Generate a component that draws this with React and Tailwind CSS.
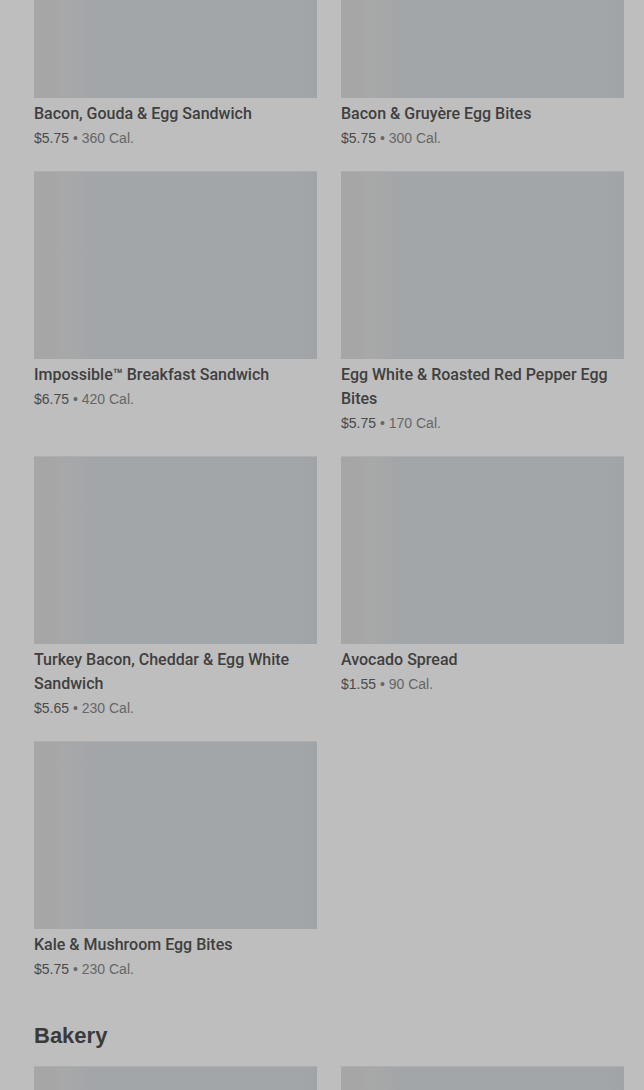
const font = { fontFamily: '"Liberation Sans", Arial, sans-serif' };
const titleFont = { fontFamily: 'Roboto, "Liberation Sans", Arial, sans-serif' };

const breakfast = [
  { name: 'Bacon, Gouda & Egg Sandwich', price: '$5.75', cal: '360 Cal.' },
  { name: 'Bacon & Gruyère Egg Bites', price: '$5.75', cal: '300 Cal.' },
  { name: 'Impossible™ Breakfast Sandwich', price: '$6.75', cal: '420 Cal.' },
  { name: 'Egg White & Roasted Red Pepper Egg Bites', price: '$5.75', cal: '170 Cal.' },
  { name: 'Turkey Bacon, Cheddar & Egg White Sandwich', price: '$5.65', cal: '230 Cal.' },
  { name: 'Avocado Spread', price: '$1.55', cal: '90 Cal.' },
  { name: 'Kale & Mushroom Egg Bites', price: '$5.75', cal: '230 Cal.' },
];

function Placeholder() {
  return (
    <div className="h-[188px] w-full border-t border-[#acaeb0] bg-[linear-gradient(90deg,#a6a6a6_0%,#a6a6a6_6%,#a8a8a8_10%,#a3a6a9_20%,#a3a6a9_94%,#a1a4a7_100%)]" />
  );
}

function ItemCard({ item }) {
  return (
    <div>
      <Placeholder />
      <p className="mt-[4px] text-[16px] leading-6 font-medium text-[#3f3f3f]" style={titleFont}>{item.name}</p>
      <p className="mt-[2px] text-[14px] leading-5 text-[#4a4a4a]">
        {item.price} <span className="text-[#666]">• {item.cal}</span>
      </p>
    </div>
  );
}

export default function App() {
  return (
    <div className="h-[1090px] overflow-hidden bg-[#bebebe]" style={font}>
      <div className="-mt-[90px] pl-[34px] pr-[20px]">
        <div className="grid grid-cols-2 gap-x-6 gap-y-[23px]">
          {breakfast.map((item) => (
            <ItemCard key={item.name} item={item} />
          ))}
        </div>

        <h2 className="mt-[42px] mb-[15px] text-[22px] leading-[30px] font-bold text-[#3a3a3a]">Bakery</h2>
        <div className="grid grid-cols-2 gap-x-6">
          <Placeholder />
          <Placeholder />
        </div>
      </div>
    </div>
  );
}
